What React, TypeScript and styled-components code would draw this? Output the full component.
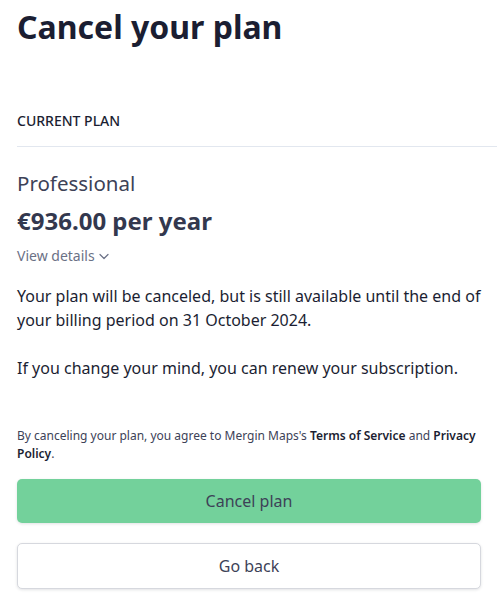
import React from 'react';
import styled, { createGlobalStyle } from 'styled-components';

const GlobalStyle = createGlobalStyle`
  body {
    margin: 0;
    background: #ffffff;
    font-family: 'Noto Sans', 'Open Sans', sans-serif;
    color: #1b1e32;
  }
`;

const Page = styled.div`
  padding: 0 0 16px 17px;
`;

const Title = styled.h1`
  margin: 0;
  padding-top: 4px;
  font-size: 32px;
  line-height: 46px;
  font-weight: 700;
  color: #1b1e32;
`;

const SectionLabel = styled.div`
  margin-top: 62px;
  padding-bottom: 16px;
  font-size: 14px;
  line-height: 18px;
  font-weight: 500;
  color: #1b1e32;
  border-bottom: 1px solid #e2e7ef;
`;

const PlanName = styled.div`
  margin-top: 22px;
  font-size: 20.5px;
  line-height: 28px;
  color: #3d4257;
`;

const Price = styled.div`
  margin-top: 8px;
  font-size: 24px;
  line-height: 32px;
  font-weight: 700;
  color: #33384e;
`;

const DetailsToggle = styled.button`
  display: flex;
  align-items: center;
  gap: 3px;
  margin-top: 9px;
  padding: 0;
  border: none;
  background: none;
  font-family: inherit;
  font-size: 14px;
  line-height: 20px;
  color: #6b7186;
  cursor: pointer;
`;

const Content = styled.div`
  padding-right: 16px;
`;

const Paragraph = styled.p`
  margin: 0;
  font-size: 16px;
  line-height: 24px;
  color: #1b1e32;

  & + & {
    margin-top: 24px;
  }
`;

const Body = styled.div`
  margin-top: 18px;
`;

const Legal = styled.p`
  margin: 47px 0 0;
  font-size: 12px;
  line-height: 18px;
  color: #3d4257;

  strong {
    font-weight: 600;
    color: #1b1e32;
  }
`;

const Actions = styled.div`
  display: flex;
  flex-direction: column;
  gap: 20px;
  margin-top: 16px;
`;

const Button = styled.button<{ primary?: boolean }>`
  height: ${({ primary }) => (primary ? '44px' : '46px')};
  border-radius: 5px;
  border: ${({ primary }) => (primary ? 'none' : '1px solid #d6d8de')};
  background: ${({ primary }) => (primary ? '#73d19b' : '#ffffff')};
  box-shadow: 0 1px 3px rgba(20, 25, 40, 0.12);
  font-family: inherit;
  font-size: 16px;
  line-height: 20px;
  padding-bottom: 2px;
  color: #3d4257;
  cursor: pointer;
`;

function ChevronDown() {
  return (
    <svg width='12' height='12' viewBox='0 0 12 12' fill='none'>
      <path d='M2 4.5L6 8.5L10 4.5' stroke='#6b7186' strokeWidth='1.2' strokeLinecap='round' strokeLinejoin='round' />
    </svg>
  );
}

function App() {
  return (
    <Page>
      <GlobalStyle />
      <Title>Cancel your plan</Title>
      <SectionLabel>CURRENT PLAN</SectionLabel>
      <Content>
        <PlanName>Professional</PlanName>
        <Price>€936.00 per year</Price>
        <DetailsToggle>
          View details <ChevronDown />
        </DetailsToggle>
        <Body>
          <Paragraph>
            Your plan will be canceled, but is still available until the end of your billing period on 31 October 2024.
          </Paragraph>
          <Paragraph>If you change your mind, you can renew your subscription.</Paragraph>
        </Body>
        <Legal>
          By canceling your plan, you agree to Mergin Maps's <strong>Terms of Service</strong> and{' '}
          <strong>Privacy Policy</strong>.
        </Legal>
        <Actions>
          <Button primary>Cancel plan</Button>
          <Button>Go back</Button>
        </Actions>
      </Content>
    </Page>
  );
}

export default App;
